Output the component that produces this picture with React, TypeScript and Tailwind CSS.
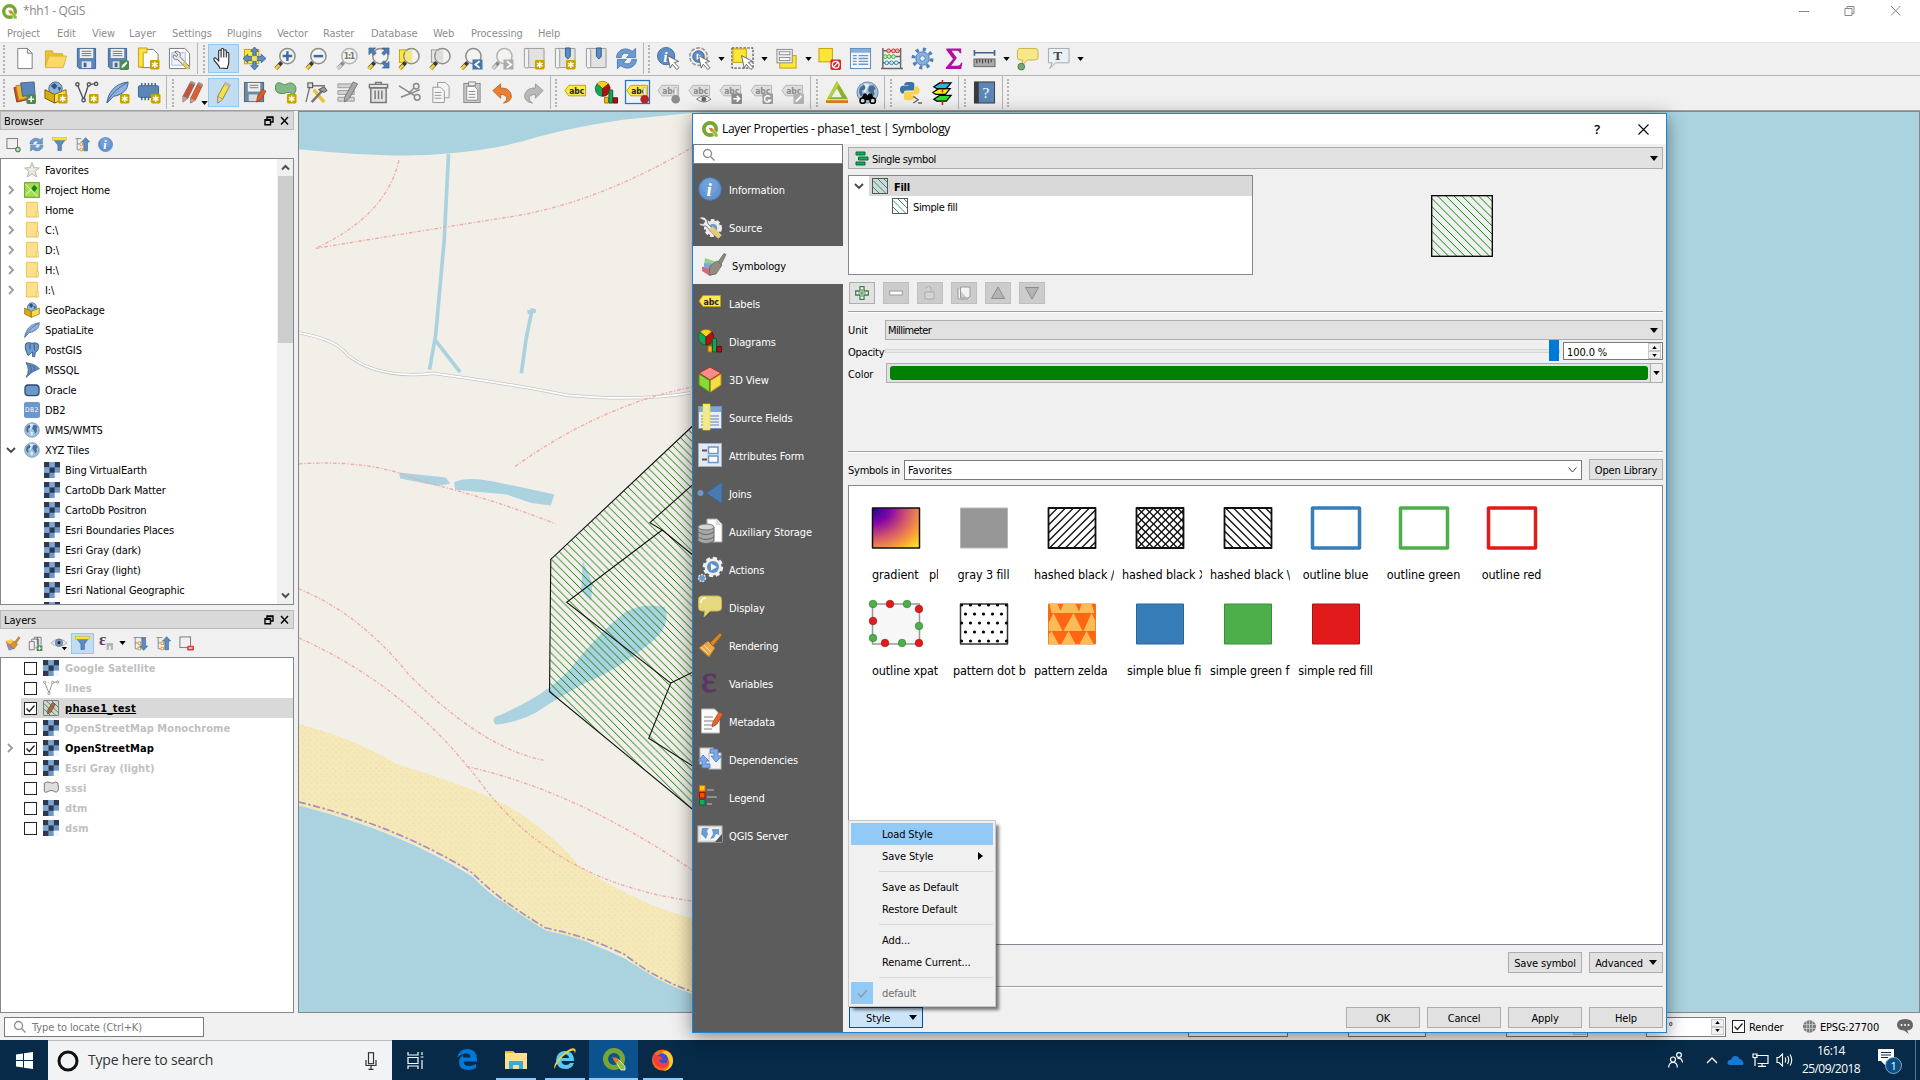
import React from "react";

type Kids = { children?: React.ReactNode };

const Svg = ({ s = 24, children }: { s?: number } & Kids) => (
  <svg width={s} height={s} viewBox="0 0 24 24" className="block shrink-0 overflow-visible">
    {children}
  </svg>
);

/* ---------- shared icon parts ---------- */
const StarBadge = () => (
  <g>
    <rect x="13.5" y="13.5" width="10" height="10" rx="1.5" fill="#c8a000" />
    <path d="M18.5 15v7M15.5 16.8l6 3.4M21.5 16.8l-6 3.4" stroke="#fff" strokeWidth="1.5" />
  </g>
);
const Lens = ({ gray = false, children }: { gray?: boolean } & Kids) => (
  <g>
    <path d="M2 22.500l6-6.500" stroke={gray ? "#8c8c8c" : "#3a3a3a"} strokeWidth="4" />
    <path d="M1.500 23l4-4.300" stroke={gray ? "#d0d0d0" : "#f5cf2e"} strokeWidth="3" />
    <circle cx="14" cy="9.500" r="8" fill="#f3f3f1" fillOpacity=".85" stroke={gray ? "#b4b4b4" : "#8f8f8b"} strokeWidth="1.600" />
    {children}
  </g>
);
const Tag = ({ gray = false, children }: { gray?: boolean } & Kids) => (
  <g>
    <path d="M1 10l4-5.500h17.500v11H5z" fill={gray ? "#dedede" : "#fce94f"} stroke={gray ? "#b5b5b5" : "#c4a000"} />
    <text x="5.500" y="13.500" fontSize="9.500" fontWeight="700" fill={gray ? "#8a8a8a" : "#222"} textLength="15.500" lengthAdjust="spacingAndGlyphs">
      abc
    </text>
    {children}
  </g>
);
const Cursor = () => <path d="M11 9l11.500 6-4.500 1.200 5 5.300-2.300 2-4.700-5.500-2.200 4z" fill="#fff" stroke="#555" strokeWidth=".9" />;
const Book = () => (
  <g>
    <path d="M5 1.500h18v20H5z" fill="#e2e2e2" stroke="#9a9a9a" />
    <path d="M5 1.500H2.500v19c0 2 4.500 2 4.500 0v-17c0-1-2-2-2-2z" fill="#f2f2f2" stroke="#9a9a9a" />
  </g>
);
const Floppy = () => (
  <g>
    <path d="M2.500 1.500h19v21h-17l-2-2z" fill="#5b86b8" stroke="#3f6391" />
    <rect x="5" y="2" width="14" height="9.500" fill="#efefef" />
    <path d="M7 4.500h10M7 6.800h10M7 9h10" stroke="#777" />
    <rect x="7" y="15" width="10" height="7" fill="#e5e5e5" />
    <rect x="9" y="16.500" width="3" height="4.500" fill="#3f6391" />
  </g>
);
const Globe = ({ c = "#9cc0e2" }: { c?: string }) => (
  <g>
    <circle cx="12" cy="12" r="11" fill={c} stroke="#6a87a6" />
    <path d="M4 7l4-3 3 1-2 4-3 1 1 4-2 2c-2-3-2-6-1-9zM14 5l4-.5 2.500 3-2 3 1 3-3 4-1.500-5-2.500-2 .5-3z" fill="#4a6d93" />
    <path d="M8 2.500l6 .5-2 4-2 5-2-1 2-4zM10 14l4 2-2 5-2-2z" fill="#e3eef8" />
  </g>
);

const I: Record<string, React.ReactNode> = {
  page: <path d="M5 1.500h10l5 5v16H5z M15 1.500v5h5" fill="#fff" stroke="#7d7d7d" />,
  folder: (
    <g>
      <path d="M1.500 21V4h7l2 3h9v3" fill="#e9c23c" stroke="#d3ab2a" />
      <path d="M1.500 21.500L5 9.500h18.500L20 21.500z" fill="#fcd965" stroke="#dcb338" />
    </g>
  ),
  save: <Floppy />,
  saveAs: (
    <g>
      <Floppy />
      <rect x="14" y="14" width="10" height="10" rx="1.500" fill="#4c8a53" />
      <path d="M16 22l1-3 4-3.500 1.300 1.300-3.500 4z" fill="#fff" />
    </g>
  ),
  newLayout: (
    <g>
      <path d="M4 2.500h13l5 5v14H4z" fill="#fff" stroke="#777" />
      <path d="M1.500 1h9v5h-4v15h-5z" fill="#fbe14c" stroke="#c8a000" />
      <StarBadge />
    </g>
  ),
  layouts: (
    <g>
      <path d="M1.500 1.500h16l5 5v16h-21z" fill="#fff" stroke="#777" />
      <rect x="4" y="6" width="14" height="13" fill="#eef2fb" stroke="#a9b8e0" />
      <path d="M7 5c4-2 7 2 5.500 5l9.500 10-2.500 2.500L10 13C7 14 4 11 6 8l3 2 1-2z" fill="#e7e7e7" stroke="#6b6b6b" />
      <path d="M16 16l5.500 6.500" stroke="#e8cd5c" strokeWidth="3.500" />
    </g>
  ),
  hand: (
    <path
      d="M8 22c0-3-5-6-6-9-.5-2 1.500-2 2.500-1L7 14.500V4.500c0-1.800 2.500-1.800 2.500 0V3c0-2 2.800-2 2.800 0v1.200c0-1.700 2.600-1.700 2.600.3v2c0-1.500 2.500-1.500 2.600.3V16c0 3-1.500 4-1.500 6.500zM9.500 4.500v6.500M12.300 4v7M14.900 6v5"
      fill="#fff"
      stroke="#222"
      strokeWidth="1.100"
    />
  ),
  pan: (
    <g>
      <rect x="1.500" y="2.500" width="15" height="15" fill="#fde638" stroke="#c4a000" />
      <path d="M12 0l4 4.500h-2.300v5.300h5.300V7.500L24 12l-5 4.500v-2.300h-5.300v5.300H16L12 24l-4-4.500h2.300v-5.300H5v2.300L0 12l5-4.500v2.300h5.300V4.500H8z" fill="#5b8cc4" stroke="#32598a" strokeWidth=".8" />
      <rect x="9.500" y="9.500" width="5" height="5" fill="#fde638" />
    </g>
  ),
  zoomIn: <Lens><path d="M14 4.500v10M9 9.500h10" stroke="#3d6ca5" strokeWidth="2.600" /></Lens>,
  zoomOut: <Lens><path d="M9 9.500h10" stroke="#3d6ca5" strokeWidth="2.600" /></Lens>,
  zoomOne: <Lens gray><text x="8" y="13" fontSize="9" fontWeight="700" fill="#777" textLength="12">1:1</text></Lens>,
  zoomFull: (
    <g>
      <Lens />
      <path d="M2 1h7L6.700 3.300l3 3L7.300 8.700l-3-3L2 8zM23 1v7l-2.300-2.300-3 3-2.400-2.400 3-3L16 1zM23 22h-7l2.300-2.300-3-3 2.400-2.400 3 3L23 15z" fill="#4b7cb3" stroke="#2f5681" strokeWidth=".6" />
    </g>
  ),
  zoomSel: (
    <g>
      <rect x="1.500" y="3" width="13" height="13" fill="#fde638" stroke="#c4a000" />
      <Lens><path d="M8 4h6.500v11c-4 1-7-2-7.500-5z" fill="#f3e67c" /></Lens>
    </g>
  ),
  zoomLayer: (
    <g>
      <rect x="2.500" y="3" width="12" height="13" fill="#e3e3e3" stroke="#999" />
      <Lens><path d="M8 4h6.500v11c-4 1-7-2-7.500-5z" fill="#dcdcdc" /></Lens>
    </g>
  ),
  zoomLast: (
    <Lens>
      <rect x="13" y="13" width="10.500" height="10.500" fill="#4677ac" />
      <path d="M20.500 14.800l-4.500 3.500 4.500 3.500" stroke="#fff" strokeWidth="1.800" fill="none" />
    </Lens>
  ),
  zoomNext: (
    <Lens gray>
      <rect x="13" y="13" width="10.500" height="10.500" fill="#adadad" />
      <path d="M16.500 14.800l4.500 3.500-4.500 3.500" stroke="#fff" strokeWidth="1.800" fill="none" />
    </Lens>
  ),
  newView: <g><Book /><StarBadge /></g>,
  newMark: <g><Book /><path d="M13 1h5v9l-2.500 2.500L13 10z" fill="#5b8cc4" stroke="#32598a" /><StarBadge /></g>,
  marks: <g><Book /><path d="M13 1h5v9l-2.500 2.500L13 10z" fill="#5b8cc4" stroke="#32598a" /></g>,
  refresh: (
    <g fill="#6c9bd0" stroke="#3f6fa6" strokeWidth=".8">
      <path d="M1.500 11C2 3 11-1 18 4.500L21.500 1.500v9.500h-9.500l3.200-3.200C10 5 7 7 6.500 11z" />
      <path d="M22.500 13c-.5 8-9.500 12-16.500 6.500L2.500 22.500V13H12l-3.200 3.200C14 19 17 17 17.500 13z" />
    </g>
  ),
  identify: (
    <g>
      <circle cx="9.500" cy="9.500" r="9" fill="#5f8fc6" stroke="#3f6fa6" />
      <text x="6.500" y="15.500" fontSize="16" fontStyle="italic" fontWeight="700" fontFamily="Liberation Serif" fill="#fff">i</text>
      <Cursor />
    </g>
  ),
  action: (
    <g>
      <circle cx="11" cy="10" r="9" fill="#eee" stroke="#999" strokeDasharray="4 1.650" strokeWidth="2" />
      <circle cx="11" cy="10" r="8.200" fill="#eee" />
      <circle cx="11" cy="10" r="6" fill="#5b8cc4" stroke="#3f6391" />
      <path d="M9 6.500v7l5.500-3.500z" fill="#fff" />
      <Cursor />
    </g>
  ),
  select: (
    <g>
      <rect x="1" y="1" width="22" height="21" fill="none" stroke="#222" strokeDasharray="2.500 1.500" />
      <rect x="2" y="2" width="14" height="14" fill="#fde638" stroke="#c4a000" />
      <Cursor />
    </g>
  ),
  form: (
    <g>
      <rect x="5" y="9" width="17" height="13" fill="#fde638" stroke="#c4a000" />
      <rect x="2" y="2.500" width="16" height="14" fill="#ececec" stroke="#8b8b8b" />
      <rect x="4.500" y="5" width="11" height="3" fill="#fff" stroke="#8b8b8b" />
      <rect x="4.500" y="11" width="11" height="3" fill="#fff" stroke="#8b8b8b" />
    </g>
  ),
  deselect: (
    <g>
      <rect x="1" y="1.500" width="14" height="14" fill="#fde638" stroke="#c4a000" />
      <rect x="13" y="13" width="11" height="11" rx="1.500" fill="#d9222a" />
      <circle cx="18.500" cy="18.500" r="3.500" fill="none" stroke="#fff" strokeWidth="1.400" />
      <path d="M16 21l5-5" stroke="#fff" strokeWidth="1.400" />
    </g>
  ),
  table: (
    <g>
      <rect x="1.500" y="1.500" width="21" height="21" fill="#f3f7fb" stroke="#5b86b8" />
      <rect x="2" y="2" width="20" height="4" fill="#86aedb" />
      <path d="M4 9h4M4 12h4M4 15h4M4 18h4M10 9h10M10 12h10M10 15h10M10 18h10" stroke="#6c97c7" strokeWidth="1.500" />
    </g>
  ),
  abacus: (
    <g>
      <path d="M3 1v21M21.500 1v21M1 22.500h23M3 4h18M3 10h18M3 16.500h18" stroke="#666" strokeWidth="1.500" />
      {[9, 14, 18].map((x) => <circle key={x} cx={x} cy="4" r="2" fill="#f7b0b0" stroke="#c33" />)}
      {[5.500, 9.500, 14].map((x) => <circle key={x} cx={x} cy="10" r="2" fill="#c4ecc4" stroke="#4a4" />)}
      {[7, 12, 17].map((x) => <circle key={x} cx={x} cy="16.500" r="2" fill="#cfe4f5" stroke="#38a" />)}
    </g>
  ),
  gear: (
    <g>
      <circle cx="12" cy="12" r="9.500" fill="none" stroke="#4f80b8" strokeWidth="4" strokeDasharray="3.200 4.260" />
      <circle cx="12" cy="12" r="7" fill="#86b0e0" stroke="#4f80b8" />
      <circle cx="12" cy="12" r="2.800" fill="#f0f0f0" stroke="#4f80b8" />
    </g>
  ),
  sigma: <path d="M4.500 1.500h15.500v5h-1.500c-.5-2-1.500-2.500-4-2.500H10l5.500 7.500L9.500 19.500h6c3 0 3.800-1 4.300-3h1.500L20 23H4v-1.500l7.500-9L4.500 3z" fill="#b0129f" />,
  ruler: (
    <g>
      <path d="M1.500 6h21M1.500 3v6M22.500 3v6" stroke="#3f6391" strokeWidth="1.700" />
      <rect x="1" y="12.500" width="22" height="8" fill="#a9a9a9" stroke="#666" />
      <path d="M4 13v4M7 13v3M10 13v4M13 13v3M16 13v4M19 13v3" stroke="#333" />
    </g>
  ),
  bubble: (
    <g>
      <path d="M4 1.500h16q3 0 3 3v6q0 3-3 3h-8l-6 6 1-6H4q-2.500 0-2.500-3v-6q0-3 2.500-3z" fill="#f8e88b" stroke="#cdaf3c" />
      <circle cx="5.500" cy="20.500" r="3.500" fill="#79a878" stroke="#4f7d4e" />
    </g>
  ),
  annot: (
    <g>
      <path d="M1.500 1.500h21.500v15H9l-6 6 2.500-6h-4z" fill="#e9f0f6" stroke="#a0a8b0" />
      <text x="6.500" y="13.500" fontSize="14" fontFamily="Liberation Serif" fontWeight="700" fill="#444">T</text>
    </g>
  ),
  dataSource: (
    <g>
      <path d="M1 7l13-3 3 15-13 3z" fill="#c5552c" stroke="#8f3b1c" />
      <path d="M3 5l14-2 2 14-13 3z" fill="#f1b52d" stroke="#b98516" />
      <path d="M8 2l14-1 1 13-13 2z" fill="#5b86b8" stroke="#3f6391" />
      <rect x="14" y="14" width="10" height="10" rx="1.500" fill="#4c8a53" />
      <path d="M19 16v6M16 19h6" stroke="#fff" strokeWidth="1.600" />
    </g>
  ),
  geopkg: (
    <g>
      <circle cx="12" cy="8" r="7" fill="#8fb4db" stroke="#486d96" />
      <path d="M7 5l4-3 3 3-3 4zM14 6l4 1-2 4z" fill="#33557d" />
      <path d="M1 9l10 5v9L1 18z" fill="#d8ac10" stroke="#7a6200" />
      <path d="M23 9l-12 5v9l12-5z" fill="#f7e04c" stroke="#7a6200" />
    </g>
  ),
  vee: (
    <g fill="none" stroke="#555" strokeWidth="1.500">
      <path d="M2.500 4l6.500 15.500L14 4l8-1.500" />
      <circle cx="2.500" cy="3.500" r="1.700" fill="#fff" /><circle cx="9" cy="20" r="1.700" fill="#fff" />
      <circle cx="14.500" cy="3.500" r="1.700" fill="#fff" /><circle cx="22" cy="3" r="1.700" fill="#fff" />
    </g>
  ),
  veeGray: (
    <g fill="none" stroke="#9a9a9a" strokeWidth="1.500">
      <path d="M2.500 4l6.500 15.500L14 4l8-1.500" />
      <circle cx="2.500" cy="3.500" r="1.700" fill="#fff" /><circle cx="9" cy="20" r="1.700" fill="#fff" />
      <circle cx="14.500" cy="3.500" r="1.700" fill="#fff" /><circle cx="22" cy="3" r="1.700" fill="#fff" />
    </g>
  ),
  feather: (
    <g>
      <path d="M1 23C2 13 8 3 23 1c0 8-5 13-15 15z" fill="#8db2dd" stroke="#3f6391" />
      <path d="M1 23C4 15 12 7 22 2" stroke="#3f6391" fill="none" />
    </g>
  ),
  chip: (
    <g>
      <path d="M5 2v18M8.500 2v18M12 2v18M15.500 2v18M19 2v18" stroke="#3f6391" strokeWidth="1.500" />
      <rect x="1.500" y="5" width="21" height="12" rx="1" fill="#5b86b8" stroke="#3f6391" />
    </g>
  ),
  pencils: (
    <g>
      <path d="M2 16L10 1l4.500 2L7 18l-5 4z" fill="#c4573a" stroke="#8a5a4a" strokeWidth=".8" />
      <path d="M10 18L18 2l4.500 2.500L15 20l-5 3z" fill="#dd5f30" stroke="#8a5a4a" strokeWidth=".8" />
      <path d="M2 16v6l5-4zM10 18v5l5-3z" fill="#a9a9a9" /><path d="M10 1l4.500 2M18 2l4.500 2.500" stroke="#999" strokeWidth="2.500" />
    </g>
  ),
  pencil: (
    <g>
      <path d="M6 16L14 1.500l5 2.500-8 15-5 4z" fill="#f4e04b" stroke="#96862a" />
      <path d="M13.500 2.500l5 2.500" stroke="#bbb" strokeWidth="3.500" />
      <path d="M6 16v7l5-4z" fill="#e8d8b0" stroke="#777" strokeWidth=".6" />
    </g>
  ),
  saveEdits: (
    <g>
      <rect x="1.500" y="1.500" width="20" height="20" fill="#6e8aa3" stroke="#4c657d" />
      <rect x="5" y="2" width="13" height="9" fill="#eee" /><path d="M7 4.500h9M7 7h9" stroke="#777" />
      <rect x="6" y="14" width="9" height="7" fill="#ddd" />
      <path d="M14 22l1-5 5-8.500 4 2-5 9z" fill="#dd5b2a" stroke="#9a3c18" strokeWidth=".7" />
    </g>
  ),
  polygon: (
    <g>
      <path d="M1.500 7c0-6 4-6 7-4 4 2 5-1 9-1 6 1 7 8 3 12-3 1-3-3-7-2-5 2-12 2-12-5z" fill="#84b987" stroke="#4c8a53" />
      <StarBadge />
    </g>
  ),
  vertex: (
    <g>
      <path d="M6 5h15M5 6L1 22" stroke="#777" strokeWidth="1.400" /><rect x="3" y="2" width="5" height="5" fill="#ddd" stroke="#444" />
      <path d="M9 9l11 13" stroke="#eac33a" strokeWidth="3.500" /><path d="M7 22L19 9" stroke="#777" strokeWidth="2.500" /><path d="M14 9l6-3 3 4-3 2z" fill="#999" stroke="#555" />
    </g>
  ),
  modify: (
    <g>
      <path d="M2 3h17v4H2zM2 10h17v4H2zM2 17h17v4H2z" fill="#d4d4d4" stroke="#999" />
      <path d="M9 17L18 1l4.500 2L14 18l-5 4z" fill="#a8a8a8" stroke="#777" />
    </g>
  ),
  trash: (
    <g fill="#e4e4e4" stroke="#777" strokeWidth="1.500">
      <path d="M4 7h16v15.500H4z" /><path d="M2.500 3.500h19V7h-19z" /><path d="M9 3.500V1.500h6v2M8.500 10v9M12 10v9M15.500 10v9" fill="none" />
    </g>
  ),
  cut: (
    <g fill="none" stroke="#8a8a8a" strokeWidth="1.600">
      <path d="M1 5l16 10M3 17L23 9" /><circle cx="20" cy="17" r="3" /><circle cx="19" cy="5.500" r="2.800" /><path d="M17 7l-6 6" />
    </g>
  ),
  copy: (
    <g fill="#f4f4f4" stroke="#999">
      <path d="M9 1.500h8l4 4v12H9z" /><path d="M4 6.500h8l4 4v12H4z" /><path d="M6 12h7M6 15h7M6 18h7" />
    </g>
  ),
  paste: (
    <g stroke="#888">
      <rect x="4" y="2.500" width="17" height="20" fill="#c9c9c9" /><path d="M7 5.500h8l3.500 3.500v11H7z" fill="#fafafa" /><rect x="9" y="1" width="7" height="4" fill="#eee" /><path d="M9 11h7M9 14h7M9 17h7" />
    </g>
  ),
  undo: <path d="M2 10l8-7v4.500c8-1 12 5 11 10-1 3-4 5-8 5.500 5-3 5-9-3-9V18z" fill="#e9803a" stroke="#c9641f" />,
  redo: <path d="M22 10l-8-7v4.500c-8-1-12 5-11 10 1 3 4 5 8 5.500-5-3-5-9 3-9V18z" fill="#b9b9b9" stroke="#989898" />,
  tag: <Tag />,
  diagram: (
    <g>
      <path d="M8 8L2 3a8 8 0 0 1 12 0z" fill="#fcd116" stroke="#8a6d00" strokeWidth=".7" />
      <path d="M8 8v8A8 8 0 0 1 2 3z" fill="#15a356" stroke="#0b5c30" strokeWidth=".7" />
      <path d="M8 8v8a8 8 0 0 0 6-13z" fill="#b01212" stroke="#5c0909" strokeWidth=".7" />
      <path d="M10 17h4v6h-4z" fill="#fcb814" stroke="#a86f00" /><path d="M14.500 9.500h4V23h-4z" fill="#15a356" stroke="#0b5c30" /><path d="M19 17.500h4.500V23H19z" fill="#b01212" stroke="#5c0909" />
    </g>
  ),
  tagPinRed: (
    <g>
      <rect x="-.5" y="-.5" width="25" height="24" fill="#eaf3fb" stroke="#2a6fc0" strokeWidth="1.300" />
      <Tag><path d="M18 7h3v9h-3z" fill="#f2f2f2" stroke="#888" strokeWidth=".5" /><circle cx="19.500" cy="19" r="4.500" fill="#b52525" /></Tag>
    </g>
  ),
  tagPin: <Tag gray><path d="M18 7h3v9h-3z" fill="#f2f2f2" stroke="#888" strokeWidth=".5" /><circle cx="19.500" cy="19" r="4.500" fill="#8c8c8c" /></Tag>,
  tagEye: <Tag gray><path d="M9 19q8-7 15 0-7 6-15 0z" fill="#eee" stroke="#777" /><circle cx="16.500" cy="19" r="2.500" fill="#666" /></Tag>,
  tagMove: <Tag gray><rect x="13" y="13" width="11" height="11" rx="1" fill="#8c8c8c" /><path d="M15 18.500h6M18.500 15.500l3 3-3 3" stroke="#fff" strokeWidth="1.700" fill="none" /></Tag>,
  tagRotate: <Tag gray><rect x="13" y="13" width="11" height="11" rx="1" fill="#9c9c9c" /><path d="M21 16.500a3.300 3.300 0 1 0 .5 3.500h-3" stroke="#fff" strokeWidth="1.500" fill="none" /></Tag>,
  tagEdit: <Tag gray><rect x="13" y="13" width="11" height="11" rx="1" fill="#b4b4b4" /><path d="M15.500 21.500l6-6" stroke="#fff" strokeWidth="2" /></Tag>,
  triangle: (
    <g>
      <path d="M12.500 0L24 19H2z" fill="#8cb02c" /><path d="M12.500 7.500l5 9.500H6.500z" fill="#f0f0f0" /><path d="M12.500 0l2 4L6.500 17 2 19z" fill="#b5d13f" />
      <path d="M1 21.500h23" stroke="#e07b1d" strokeWidth="3" />
    </g>
  ),
  binocular: (
    <g>
      <Globe c="#a9c3dc" />
      <path d="M4.500 20l3.500-7h2.500l1.500 2 1.500-2H16l4 7z" fill="#0a0a0a" /><circle cx="7" cy="20.500" r="2.800" fill="#dcdcdc" stroke="#000" strokeWidth="1.600" /><circle cx="17.500" cy="20.500" r="2.800" fill="#dcdcdc" stroke="#000" strokeWidth="1.600" />
    </g>
  ),
  python: (
    <g>
      <path d="M9 1h4q3 0 3 3v4q0 2-3 2H8q-3 0-3 3H3q-2-1-2-4 0-4 3-4h6V4.500H5.500V3Q6 1 9 1z" fill="#3b73a6" />
      <path d="M11 20h-3q-3 0-3-3v-3q0-3 3-3h5q3 0 3-3V5.500h2.500q3 1 3 4.500 0 4-3 4h-6v1H16v2q0 3-5 3z" fill="#fcd24a" />
      <path d="M15 16l5 3.500-5 3.500M20 23h4" stroke="#666" strokeWidth="1.400" fill="none" />
    </g>
  ),
  layers3: (
    <g stroke="#000" strokeWidth="1.300">
      <path d="M4 19l6-4h12l-5 6H7z" fill="#2ee02e" /><path d="M3 12l6-4h12l-5 6H6z" fill="#f5f11a" /><path d="M4 6l6-4h12l-5 6H7z" fill="#2bb5d8" />
      <path d="M13-1v4M13 8v4M13 21v4" stroke="#e01010" strokeWidth="1.600" />
    </g>
  ),
  help: (
    <g>
      <rect x="1.500" y="1" width="21" height="22" fill="#5b86b8" stroke="#3a3a3a" /><rect x="1.500" y="1" width="4.500" height="22" fill="#3a3a3a" />
      <text x="10" y="17.500" fontSize="16" fontFamily="Liberation Serif" fill="#fff">?</text>
    </g>
  ),
  /* browser / layer tree */
  addLayer: <g><rect x="1.500" y="2.500" width="17" height="16" fill="none" stroke="#777" strokeWidth="1.500" /><circle cx="19" cy="20" r="3.500" fill="#cfe6cf" stroke="#4c8a53" strokeWidth="2" /></g>,
  filter: <g><path d="M1.500 2.500h21L15 13v8.500h-5.500V13z" fill="#5b8cc4" stroke="#3f6391" /><rect x="1" y="1" width="22" height="4" fill="#fde638" stroke="#c4a000" strokeWidth=".7" /></g>,
  collapse: (
    <g>
      <path d="M1 2.500h9M3.500 2v18.500h4M3.500 11h4" stroke="#888" strokeWidth="1.500" fill="none" /><path d="M8 9.500h4v4H8zM8 18h4v4H8z" fill="#fff" stroke="#e7942a" strokeWidth="1.500" />
      <path d="M17 1l6.500 7H20v14h-6V8h-3.500z" fill="#5b8cc4" stroke="#3f6391" />
    </g>
  ),
  expand: (
    <g>
      <path d="M1 2.500h20M3.500 2v18.500h4M3.500 11h4" stroke="#888" strokeWidth="1.500" fill="none" /><path d="M8 9.500h4v4H8zM8 18h4v4H8z" fill="#fff" stroke="#e7942a" strokeWidth="1.500" />
      <path d="M17 23l6.500-7H20V3h-6v13h-3.500z" fill="#5b8cc4" stroke="#3f6391" />
    </g>
  ),
  info: <g><circle cx="12" cy="12" r="11.300" fill="#6395d2" stroke="#4a7ab5" /><circle cx="12" cy="9" r="8" fill="#86aee0" opacity=".4" /><text x="8.500" y="18.500" fontSize="19" fontStyle="italic" fontWeight="700" fontFamily="Liberation Serif" fill="#fff">i</text></g>,
  star: <path d="M12 1l3 7.500 8 .5-6.200 5 2.200 8.500-7-4.700-7 4.700L7.200 14 1 9l8-.5z" fill="#e9e9e1" stroke="#b5b5aa" strokeWidth="1.500" />,
  projHome: <g><rect x="1" y="1" width="22" height="22" fill="#a6dc4e" stroke="#5aa02c" strokeWidth="1.500" /><path d="M2 3l18 19M2 19L14 9" stroke="#e6f7c0" strokeWidth="1.500" /><path d="M15 4l5 5-4 6-5-5z" fill="#128a12" /></g>,
  dir: <g><path d="M3.500 .5h17v22h-17z" fill="#fce08b" stroke="#e5bd45" strokeWidth="1.300" /><path d="M18.500 14h3v8.500h-3z" fill="#fce9ae" stroke="#e5bd45" /></g>,
  elephant: <path d="M3 2q5-2 9 0 5-2 9 1 2 3 0 8-1 3-4 4l-1 7h-3v-7l-2 1q-3 4-5 4l-2-4Q0 8 3 2zM9 3v8M15 3l1 10" fill="#6e9bcf" stroke="#395c86" strokeWidth="1.500" />,
  mssql: <path d="M3 1q14 2 20 9-10 3-20 13Q10 12 3 1zM9 4q4 7 1 12M14 5q3 5 1 8" fill="#5f8cbf" stroke="#3d5f8c" strokeWidth="1.300" />,
  oracle: <rect x="1.500" y="4.500" width="21" height="16" rx="5" fill="#6b97ca" stroke="#2f4b70" strokeWidth="2" />,
  db2: <g><rect width="24" height="24" rx="3" fill="#6b97ca" /><text x="1.500" y="15" fontSize="10" fill="#fff" textLength="20">DB2</text></g>,
  globe: <Globe />,
  tiles: (
    <g>
      <rect width="24" height="24" fill="#6e97c7" />
      <path d="M0 0h8v8H0zM16 0h8v8h-8zM8 8h8v8H8zM0 16h8v8H0z" fill="#2d3a4e" />
      <path d="M8 0h8v8H8zM0 8h8v8H0z" fill="#7ea5d4" /><path d="M16 16h8v8h-8z" fill="#f4f7fb" />
    </g>
  ),
  brush: (
    <g>
      <path d="M1 8l12 1 2 11-9 3z" fill="#e36a6a" /><path d="M1 8l9-3 6 4-6 6z" fill="#f4cf45" /><path d="M3 16l8-3 3 7-6 3z" fill="#6c9bd6" />
      <path d="M8 15l7-7 5 5-6 8z" fill="#d8943b" stroke="#9c6420" /><path d="M16 9l6-8 2 2-6 8z" fill="#d8943b" stroke="#9c6420" />
    </g>
  ),
  group: <g fill="none" stroke="#777" strokeWidth="1.500"><path d="M2 9h8v13H2zM6 9V5h11v14h-5M10 5V2h11v12" /><path d="M15 2v12" stroke="#3f6391" /><rect x="14" y="15" width="9" height="9" fill="#4c8a53" stroke="none" /><path d="M18.500 16.500v6M15.500 19.500h6" stroke="#fff" /></g>,
  eye: <g><path d="M0 12q12-12 24 0-12 10-24 0z" fill="#e9e9e9" stroke="#999" /><circle cx="12" cy="11.500" r="5.500" fill="#7c9cbd" stroke="#4e6d8e" /><circle cx="12" cy="11.500" r="2.200" fill="#123" /><path d="M16 18h8l-4 5z" fill="#000" /></g>,
  epsilon: <g><text x="0" y="16" fontSize="29" fontFamily="Liberation Serif" fontWeight="700" fill="#683b6e">ε</text><path d="M13 12h11v12h-4v-7h-3v7h-4z" fill="#b5b5b5" /></g>,
  removeLayer: <g><rect x="1.500" y="1.500" width="17" height="17" fill="none" stroke="#777" strokeWidth="1.500" /><rect x="13" y="15.500" width="11" height="7.500" rx="2" fill="#e0393e" /><path d="M15.500 19.200h6" stroke="#fff" strokeWidth="2" /></g>,
  sssi: <path d="M2 5q4-4 9-1 4 2 8-1 4 0 4 6 1 8-3 9-3 0-5-2-5-1-9 2-5 2-4-5z" fill="#dedede" stroke="#777" strokeWidth="1.500" />,
  phase: (
    <g>
      <rect x="1" y="1" width="22" height="22" fill="#cfd6cf" stroke="#555" /><path d="M1 5l18 18M5 1l18 18M13 1l10 10M1 13l10 10" stroke="#2f7a46" strokeWidth="1.200" />
      <path d="M7 15L14 4l4.500 2.500L12 18l-5 3z" fill="#9d6a46" stroke="#6b4429" />
    </g>
  ),
  /* dialog pages */
  source: (
    <g>
      <circle cx="15" cy="13" r="7.500" fill="#e6e6e6" stroke="#efefef" strokeWidth="3" strokeDasharray="3.500 2" /><circle cx="15" cy="13" r="4" fill="#6d9ac9" />
      <path d="M1 3q5-3 8 2l1 4 12 11-3 3L8 11Q2 12 1 8l4 1 2-3z" fill="#ececec" stroke="#666" strokeWidth=".8" /><path d="M13 13l9 9" stroke="#e6cb78" strokeWidth="5" />
    </g>
  ),
  symb: (
    <g>
      <path d="M1 14l14-2-1 9-5 2-8-5z" fill="#d56a78" /><path d="M4 5l12 4-3 6-10-3z" fill="#93d08a" /><path d="M3 10l10 1 2 5-12-1z" fill="#7ba7de" />
      <path d="M9 13l7-5 5 4-6 9-7 1z" fill="#938d80" stroke="#666" strokeWidth=".8" /><path d="M17 9l6-8.500 2 1-5 10z" fill="#8f8a80" stroke="#666" strokeWidth=".8" />
    </g>
  ),
  cube: <g strokeWidth="1"><path d="M12 0l11 6-11 7L1 6z" fill="#f58c8c" stroke="#b92626" /><path d="M1 7l10.500 6.500V25L1 18z" fill="#8ad839" stroke="#4e9412" /><path d="M23 7l-10.500 6.500V25L23 18z" fill="#f7dc4a" stroke="#b99708" /></g>,
  fields: (
    <g>
      <rect x=".5" y="1.500" width="23" height="22" fill="#e9eef4" stroke="#7394b8" /><rect x="1" y="2" width="22" height="5" fill="#7ea7d6" /><path d="M3 11h18M3 14h18M3 17h18M3 20h18" stroke="#8ba6c4" strokeWidth="1.500" />
      <rect x="5.500" y="-.5" width="6" height="25" fill="#f0e8a0" stroke="#f7ee3c" strokeWidth="1.500" />
    </g>
  ),
  attr: <g><rect x=".5" y=".5" width="23" height="23" fill="#e4e9ee" stroke="#9db2c8" /><path d="M4 7.500h5M4 16.500h5" stroke="#556" strokeWidth="2" /><path d="M10.500 4h9.500v6.500h-9.500zM10.500 13h9.500v6.500h-9.500z" fill="#fff" stroke="#6a97cc" strokeWidth="1.500" /></g>,
  joins: <g><circle cx="2.500" cy="12" r="3" fill="#6a97cc" /><path d="M24 1v22L8 12z" fill="#4b7ab0" stroke="#3a6292" /></g>,
  aux: (
    <g>
      <path d="M9 0h10l5 5v18H9z" fill="#fff" stroke="#aaa" /><path d="M18 0v6h6" fill="#ddd" />
      <path d="M0 8v14q8 5 16 0V8z" fill="#a8a8a8" stroke="#666" /><path d="M0 13q8 5 16 0M0 18q8 5 16 0" stroke="#666" fill="none" /><ellipse cx="8" cy="8" rx="8" ry="3" fill="#d5d5d5" stroke="#777" />
    </g>
  ),
  actions: (
    <g>
      <circle cx="15" cy="10" r="8.500" fill="#eee" stroke="#eee" strokeWidth="3.500" strokeDasharray="4 2.600" /><circle cx="15" cy="10" r="8" fill="#eee" /><circle cx="15" cy="10" r="6" fill="#5f91c8" />
      <path d="M13 6.500v7l6-3.500z" fill="#fff" /><circle cx="4" cy="21" r="3.500" fill="#6d9ac9" stroke="#ddd" strokeWidth="1.500" strokeDasharray="2 1" />
    </g>
  ),
  display: <g><path d="M4 1h16q3.500 0 3.500 3.500v8q0 3.500-3.500 3.500h-8l-6 6 1-6H4Q.5 16 .5 12.500v-8Q.5 1 4 1z" fill="#e6d97d" stroke="#c9b94d" /><path d="M3 8q0-5 5-5" stroke="#fff" strokeWidth="1.500" fill="none" /></g>,
  render: <g><path d="M1 15l9-7 7 7-6 9z" fill="#e9a94e" stroke="#b77624" /><path d="M12 10L22 0l2 2-9 11z" fill="#d28a2e" stroke="#9e6213" /><path d="M3 14l7 7M6 12l7 7" stroke="#fce0ae" /></g>,
  vars: <text x="3" y="21" fontSize="38" fontFamily="Liberation Serif" fill="#5c3566" stroke="#5c3566" strokeWidth=".8">ε</text>,
  meta: <g><path d="M3.500 0h13l5 5v19h-18z" fill="#fafafa" stroke="#bbb" /><path d="M6 8h9M6 12h12M6 16h12M6 20h8" stroke="#aaa" strokeWidth="1.300" /><path d="M14 18l1-5 6-10 4 2-6 10z" fill="#e2662e" stroke="#a23f14" strokeWidth=".7" /></g>,
  deps: (
    <g>
      <rect x="2" y="1" width="13" height="16" fill="#f2f2f2" stroke="#bbb" /><rect x="11" y="6" width="12" height="16" fill="#f2f2f2" stroke="#bbb" />
      <path d="M12 2h8v7h4l-6 6-5-6h3V6h-4zM12 21H4v-7H0l5-6 6 6H8v3h4z" fill="#7fa9ea" stroke="#4676c0" strokeWidth=".8" />
    </g>
  ),
  legend: (
    <g>
      <rect x="1.500" y=".5" width="5.500" height="5.500" fill="#fcc40e" stroke="#d96f00" /><rect x="1.500" y="7.500" width="5.500" height="5.500" fill="#f55200" stroke="#b00" /><rect x="1.500" y="14.500" width="5.500" height="5.500" fill="#0fae57" stroke="#064" />
      <path d="M9 5h7M9 12h10M9 19h5" stroke="#8f8f8f" strokeWidth="2" />
    </g>
  ),
  server: <g><rect x="0" y="3" width="24" height="16" fill="#e6e6e6" stroke="#bbb" /><rect x="3" y="5" width="18" height="12" fill="#f4f7fa" /><path d="M4 5h7l-2 3 1 3-2 5-3-3-2-2zM14 6h7v6l-3-1-2 4-4 1 3-5z" fill="#6c9bd0" /><path d="M24 11l-7 8h7z" fill="#555" /></g>,
};

const Icon = ({ n, s = 24 }: { n: string; s?: number }) => <Svg s={s}>{I[n]}</Svg>;

const QLogo = ({ s }: { s: number }) => (
  <Svg s={s}>
    <path fillRule="evenodd" d="M12 0a12 12 0 1 1 0 24A12 12 0 0 1 12 0zm0 5.500a6.500 6.500 0 1 0 0 13a6.500 6.500 0 0 0 0-13z" fill="#76a732" />
    <path d="M13 13l4-.5L24 20v4h-4.500z" fill="#8fbf3f" stroke="#fff" strokeWidth=".8" />
    <path d="M10 10l5 .5 2.500 2.500-3.500 3.500-2-2.500z" fill="#ee7913" />
  </Svg>
);

const Down = ({ big = false }: { big?: boolean }) => (
  <svg width={big ? 8 : 7} height={big ? 5 : 4} viewBox="0 0 8 5" className="block shrink-0">
    <path d="M0 0h8L4 5z" fill="#000" />
  </svg>
);
const Grip = () => <div className="mx-[3px] h-7 w-0 shrink-0 border-l-2 border-dotted border-[#b4b4b4]" />;
const Chev = ({ open = false }: { open?: boolean }) => (
  <svg width="10" height="10" viewBox="0 0 10 10" fill="none" stroke={open ? "#444" : "#9c9c9c"} strokeWidth="1.800">
    <path d={open ? "M1 3l4 4 4-4" : "M3 1l4 4-4 4"} />
  </svg>
);

/* ---------- toolbars ---------- */
const Tool = ({ n, on = false, w, arrow = false, star = false }: { n: string; on?: boolean; w?: string; arrow?: boolean; star?: boolean }) => (
  <div className={`flex h-full shrink-0 items-center ${w ?? "w-[31px]"}`}>
    <div className={`relative flex h-[29px] w-[31px] shrink-0 items-center justify-center ${on ? "border border-[#92c9f3] bg-[#c2dcf2]" : ""}`}>
      <Icon n={n} s={23} />
      {star && <div className="absolute bottom-[3px] right-[3px]"><Svg s={23}><StarBadge /></Svg></div>}
    </div>
    {arrow && <div className="ml-[3px]"><Down /></div>}
  </div>
);

const Toolbars = () => (
  <div className="h-[69px] shrink-0 border-b border-[#a0a0a0] bg-[#f0f0f0]">
    <div className="flex h-[34px] items-center border-b border-t border-b-[#b5b5b5] border-t-[#e5e5e5] pb-[1px]">
      <Grip />
      <div className="ml-[1px] flex h-full w-[189px] shrink-0 border-r border-[#b5b5b5]">
        {["page", "folder", "save", "saveAs", "newLayout", "layouts"].map((n) => <Tool key={n} n={n} />)}
      </div>
      <div className="w-[2px]" />
      <Grip />
      <div className="flex h-full w-[436px] shrink-0 border-r border-[#b5b5b5]">
        <Tool n="hand" on />
        {["pan", "zoomIn", "zoomOut", "zoomOne", "zoomFull", "zoomSel", "zoomLayer", "zoomLast", "zoomNext", "newView", "newMark", "marks", "refresh"].map((n) => <Tool key={n} n={n} />)}
      </div>
      <div className="w-[1px]" />
      <Grip />
      <Tool n="identify" />
      <Tool n="action" arrow w="w-[43px]" />
      <Tool n="select" arrow w="w-[44px]" />
      <Tool n="form" arrow w="w-[43px]" />
      {["deselect", "table", "abacus", "gear", "sigma"].map((n) => <Tool key={n} n={n} />)}
      <Tool n="ruler" arrow w="w-[43px]" />
      <Tool n="bubble" />
      <Tool n="annot" arrow w="w-[43px]" />
    </div>
    <div className="flex h-[34px] items-center pb-[1px]">
      <Grip />
      <div className="ml-[1px] flex h-full w-[158px] shrink-0 border-r border-[#b5b5b5]">
        <Tool n="dataSource" />
        <Tool n="geopkg" star />
        <Tool n="vee" star />
        <Tool n="feather" star />
        <Tool n="chip" star />
      </div>
      <div className="w-[2px]" />
      <Grip />
      <div className="flex h-full w-[374px] shrink-0 border-r border-[#b5b5b5]">
        <div className="relative h-full">
          <Tool n="pencils" />
          <div className="absolute bottom-1 right-0"><Down /></div>
        </div>
        <Tool n="pencil" on />
        {["saveEdits", "polygon", "vertex", "modify", "trash", "cut", "copy", "paste", "undo", "redo"].map((n) => <Tool key={n} n={n} />)}
      </div>
      <div className="w-[1px]" />
      <Grip />
      <div className="flex h-full w-[251px] shrink-0 border-r border-[#b5b5b5]">
        {["tag", "diagram", "tagPinRed", "tagPin", "tagEye", "tagMove", "tagRotate", "tagEdit"].map((n) => <Tool key={n} n={n} />)}
      </div>
      <div className="w-[2px]" />
      <Grip />
      <div className="flex h-full w-[64px] shrink-0 border-r border-[#b5b5b5]">
        <Tool n="triangle" /><Tool n="binocular" />
      </div>
      <div className="w-[2px]" />
      <Grip />
      <div className="flex h-full w-[64px] shrink-0 border-r border-[#b5b5b5]">
        <Tool n="python" /><Tool n="layers3" />
      </div>
      <div className="w-[2px]" />
      <Grip />
      <div className="flex h-full w-[34px] shrink-0 border-r border-[#b5b5b5]"><Tool n="help" /></div>
      <div className="w-[1px]" />
      <Grip />
    </div>
  </div>
);

const MENUS: [string, string][] = [
  ["Project", "w-[50px]"], ["Edit", "w-[35px]"], ["View", "w-[37px]"], ["Layer", "w-[43px]"], ["Settings", "w-[55px]"], ["Plugins", "w-[50px]"],
  ["Vector", "w-[46px]"], ["Raster", "w-[48px]"], ["Database", "w-[62px]"], ["Web", "w-[38px]"], ["Processing", "w-[67px]"], ["Help", "w-[40px]"],
];

/* ---------- left docks ---------- */
const DockTitle = ({ t }: { t: string }) => (
  <div className="flex h-[19px] shrink-0 items-center border border-[#b9b9b9] bg-[#d9d9d9] pl-[3px] pr-[4px]">
    <span className="flex-1 pt-[2px]">{t}</span>
    <svg width="25" height="10" viewBox="0 0 25 10" fill="none" stroke="#000" strokeWidth="1.400">
      <path d="M3 3V1h6v5H7M3 1.500h6" /><path d="M1 3.700h5.500v5H1zM1 4.200h5.500" /><path d="M17 1l7 7.500M24 1l-7 7.500" />
    </svg>
  </div>
);

const BROWSER: [string, string, string][] = [
  ["star", "Favorites", ""], ["projHome", "Project Home", ">"], ["dir", "Home", ">"], ["dir", "C:\\", ">"], ["dir", "D:\\", ">"], ["dir", "H:\\", ">"], ["dir", "I:\\", ">"],
  ["geopkg", "GeoPackage", ""], ["feather", "SpatiaLite", ""], ["elephant", "PostGIS", ""], ["mssql", "MSSQL", ""], ["oracle", "Oracle", ""], ["db2", "DB2", ""],
  ["globe", "WMS/WMTS", ""], ["globe", "XYZ Tiles", "v"],
];
const TILES = ["Bing VirtualEarth", "CartoDb Dark Matter", "CartoDb Positron", "Esri Boundaries Places", "Esri Gray (dark)", "Esri Gray (light)", "Esri National Geographic"];

const LAYERS: [string, string, boolean, boolean][] = [
  ["tiles", "Google Satellite", false, false], ["veeGray", "lines", false, false], ["phase", "phase1_test", true, false], ["tiles", "OpenStreetMap Monochrome", false, false],
  ["tiles", "OpenStreetMap", true, true], ["tiles", "Esri Gray (light)", false, false], ["sssi", "sssi", false, false], ["tiles", "dtm", false, false], ["tiles", "dsm", false, false],
];

const Check = ({ on = false }: { on?: boolean }) => (
  <div className="flex h-[13px] w-[13px] shrink-0 items-center justify-center border border-[#222] bg-white">
    {on && <svg width="11" height="9" viewBox="0 0 11 9"><path d="M1.500 4.500l2.800 3L9.500 1.500" fill="none" stroke="#222" strokeWidth="1.300" /></svg>}
  </div>
);

const Docks = () => (
  <div className="flex w-[294px] shrink-0 flex-col">
    <DockTitle t="Browser" />
    <div className="flex h-[28px] shrink-0 items-center gap-[8px] pl-[6px]">
      {["addLayer", "refresh", "filter", "collapse", "info"].map((n) => <Icon key={n} n={n} s={15} />)}
    </div>
    <div className="flex h-[447px] shrink-0 overflow-hidden border border-[#828790] bg-white">
      <div className="flex-1 pt-[1px]">
        {BROWSER.map(([ic, t, a]) => (
          <div key={t} className="flex h-5 items-center pl-[5px]">
            <div className="w-[18px]">{a && <Chev open={a === "v"} />}</div>
            <Icon n={ic} s={16} />
            <span className="ml-[5px] pt-[2px]">{t}</span>
          </div>
        ))}
        {TILES.map((t) => (
          <div key={t} className="flex h-5 items-center pl-[43px]">
            <Icon n="tiles" s={16} />
            <span className="ml-[5px] whitespace-nowrap pt-[2px] tracking-[-0.13px]">{t}</span>
          </div>
        ))}
        <div className="pl-[43px] pt-[2px]"><Icon n="tiles" s={16} /></div>
      </div>
      <div className="flex w-[16px] flex-col items-center justify-between bg-[#f0f0f0] py-[4px]">
        <svg width="9" height="9" viewBox="0 0 9 9"><path d="M1 6.500l3.500-3.500L8 6.500" fill="none" stroke="#505050" strokeWidth="2" /></svg>
        <div className="mb-auto mt-[4px] h-[167px] w-[15px] bg-[#cdcdcd]" />
        <svg width="9" height="9" viewBox="0 0 9 9"><path d="M1 2.500L4.500 6 8 2.500" fill="none" stroke="#505050" strokeWidth="2" /></svg>
      </div>
    </div>
    <div className="h-[5px] shrink-0" />
    <DockTitle t="Layers" />
    <div className="flex h-[28px] shrink-0 items-center pl-[5px]">
      <Icon n="brush" s={15} />
      <div className="w-[8px]" />
      <Icon n="group" s={15} />
      <div className="w-[8px]" />
      <Icon n="eye" s={16} />
      <div className="ml-[4px] flex h-[21px] w-[23px] items-center justify-center border border-[#92c9f3] bg-[#c2dcf2]"><Icon n="filter" s={15} /></div>
      <div className="ml-[5px]"><Icon n="epsilon" s={14} /></div>
      <div className="ml-[6px] mr-[7px]"><Down /></div>
      <Icon n="expand" s={15} />
      <div className="w-[8px]" />
      <Icon n="collapse" s={15} />
      <div className="w-[8px]" />
      <Icon n="removeLayer" s={15} />
    </div>
    <div className="h-[356px] shrink-0 border border-[#828790] bg-white">
      {LAYERS.map(([ic, t, on, arrow]) => (
        <div key={t} className="flex h-5">
          <div className="flex w-5 items-center pl-[4px]">{arrow && <Chev />}</div>
          <div className={`flex flex-1 items-center pl-[3px] ${ic === "phase" ? "bg-[#d9d9d9]" : ""}`}>
            <Check on={on} />
            <div className="ml-[6px]"><Icon n={ic} s={16} /></div>
            <span className={`ml-[6px] whitespace-nowrap pt-[2px] font-bold ${on ? "text-black" : "text-[#c0c0c0]"} ${ic === "phase" ? "tracking-[0.35px] underline" : "tracking-[0.08px]"}`}>{t}</span>
          </div>
        </div>
      ))}
    </div>
  </div>
);

/* ---------- map canvas ---------- */
const MapCanvas = () => (
  <div className="flex-1 overflow-hidden border border-[#828790] bg-[#aad3df]">
    <svg width="1621" height="901" viewBox="243.400 90.600 1323.800 735.800" className="block">
      <defs>
        <pattern id="hatch" width="6.400" height="6.400" patternUnits="userSpaceOnUse">
          <path d="M-1-1l9 9M-1 5.400l2 2M5.400-1l2 2" stroke="#0a7a0a" strokeWidth=".8" />
        </pattern>
        <pattern id="sand" width="5" height="5" patternUnits="userSpaceOnUse">
          <rect width="5" height="5" fill="#f5e9b9" /><path d="M1 1h1v1H1zM3 3h1v1H3z" fill="#ecd9a0" />
        </pattern>
      </defs>
      <rect x="243" y="90" width="1324" height="737" fill="#aad3df" />
      <path d="M243 121q60 6 95 5 60-2 100-15 30-8 70-14l60-6v720L243 655z" fill="#f2efe9" />
      <path d="M243 590q50 14 80 33 60 18 90 34 35 20 60 50 50 32 92 42v62q-30-10-55-30-30-15-65-22-40-24-60-45-60-38-142-57z" fill="url(#sand)" />
      <path d="M243 657q82 20 142 58 20 21 60 45 35 7 65 22 25 20 55 30v20H243z" fill="#aad3df" />
      <path d="M243 654q82 20 142 58 20 21 60 45 35 7 65 22 25 20 55 30" fill="none" stroke="#a98fc0" strokeWidth="1.400" strokeDasharray="6 2 2 2" />
      <path d="M365.500 125l-3.500 70-7 78-5 28M354 276l21 27M434 251l-5 24-4 29M430 254l7-1" fill="none" stroke="#aad3df" strokeWidth="3" />
      <path d="M325 385l38 4 4 5-10 2-31-6zM370 393q10-5 30-1l30 6 22 5-3 9-16-2-20-7-42-4z" fill="#aad3df" />
      <path d="M243 271q30 5 40 18 25 20 70 15 60 8 110 18 60 5 100-2" fill="none" stroke="#c4c4c4" strokeWidth="2.600" />
      <path d="M243 271q30 5 40 18 25 20 70 15 60 8 110 18 60 5 100-2" fill="none" stroke="#fff" strokeWidth="1.400" />
      <g fill="none" stroke="#f2a9a6" strokeWidth="1.100" strokeDasharray="3 1.500 1 1.500">
        <path d="M325 130q-10 45-68 72" /><path d="M257 202q90-15 160-26t150-58" /><path d="M243 378q60-4 100 14 60 15 110 35" />
        <path d="M420 380q70-50 145-65" /><path d="M243 480q50 20 90 70 60 60 110 70" /><path d="M243 520q90 40 150 120t172 95" /><path d="M380 625q90 20 185 85" />
      </g>
      <path d="M542 495q6 14-10 28-30 24-55 34-25 14-40 24-15 8-33 10-5-6 4-8 45-20 62-44 22-26 40-40 14-8 32-4zM475 457l8 18-1 15-8-8z" fill="#aad3df" />
      <path d="M567 345L449 456l-1 108 118 97 300-40V345z" fill="url(#hatch)" />
      <g fill="none" stroke="#111" strokeWidth=".9">
        <path d="M567 345L449 456l-1 108 118 97" /><path d="M567 393l-37 33 10 6-78 59 85 66 20-10M540 432l27 22M547 557l-18 45 38 24" />
      </g>
    </svg>
  </div>
);

/* ---------- dialog ---------- */
const PAGES: [string, string][] = [
  ["info", "Information"], ["source", "Source"], ["symb", "Symbology"], ["tag", "Labels"], ["diagram", "Diagrams"], ["cube", "3D View"], ["fields", "Source Fields"], ["attr", "Attributes Form"],
  ["joins", "Joins"], ["aux", "Auxiliary Storage"], ["actions", "Actions"], ["display", "Display"], ["render", "Rendering"], ["vars", "Variables"], ["meta", "Metadata"], ["deps", "Dependencies"],
  ["legend", "Legend"], ["server", "QGIS Server"],
];

const Btn = ({ t, arrow = false }: { t: string; arrow?: boolean }) => (
  <div className="flex h-[21px] w-[74px] shrink-0 items-center justify-center border border-[#adadad] bg-[#e1e1e1]">
    <span className="whitespace-nowrap pt-[2px] tracking-[-0.15px]">{t}</span>
    {arrow && <div className="ml-[6px]"><Down big /></div>}
  </div>
);
const Rule = ({ c = "" }: { c?: string }) => <div className={`h-[2px] shrink-0 border-t border-[#a0a0a0] bg-white ${c}`} />;

const SmallHatch = ({ bg }: { bg: string }) => (
  <svg width="16" height="16" viewBox="0 0 16 16" className="block shrink-0">
    <rect x=".5" y=".5" width="15" height="15" fill={bg} stroke="#555" />
    <path d="M1 9l6 6M1 2.500L13.500 15M6 1l9 9M12 1l3 3" stroke="#1b8a3c" strokeWidth=".9" />
  </svg>
);

const Spin = () => (
  <div className="flex h-[16px] w-[13px] flex-col justify-between">
    <div className="flex h-[8px] items-center justify-center border border-[#c8c8c8] bg-[#f0f0f0]"><svg width="5" height="3" viewBox="0 0 6 4"><path d="M0 4h6L3 0z" /></svg></div>
    <div className="flex h-[8px] items-center justify-center border border-[#c8c8c8] bg-[#f0f0f0]"><svg width="5" height="3" viewBox="0 0 6 4"><path d="M0 0h6L3 4z" /></svg></div>
  </div>
);

const Frame = ({ fill, stroke, w = 2, kids }: { fill: string; stroke: string; w?: number; kids?: React.ReactNode }) => (
  <svg width="52" height="46" viewBox="0 0 52 46" className="block overflow-visible">
    <rect x="2.500" y="3" width="47" height="40" fill={fill} stroke={stroke} strokeWidth={w} strokeLinejoin="round" />
    {kids}
  </svg>
);
const range = (n: number) => Array.from({ length: n }, (_, i) => i);
const fwd = <g stroke="#111" strokeWidth="1.300">{range(11).map((i) => <path key={i} d={`M${-36 + i * 8} 43l40-40`} />)}</g>;
const back = <g stroke="#111" strokeWidth="1.300">{range(11).map((i) => <path key={i} d={`M${-36 + i * 8} 3l40 40`} />)}</g>;
const clip = (k: React.ReactNode) => (
  <svg x="2.500" y="3" width="47" height="40" viewBox="3 3 47 40">{k}</svg>
);
const reds: [number, number][] = [[20, 3], [49, 8], [3, 20], [15, 42], [49, 42]];
const greens: [number, number][] = [[3, 3], [37, 3], [49, 25], [3, 37], [32, 42]];

const SYMBOLS: [string, React.ReactNode, string][] = [
  ["gradient   plasma", <Frame fill="url(#plasma)" stroke="#111" w={1.5} kids={<defs><radialGradient id="plasma" cx="0" cy="0" r="1.35"><stop offset="0" stopColor="#1a0a90" /><stop offset=".28" stopColor="#8405a7" /><stop offset=".55" stopColor="#d3556d" /><stop offset=".8" stopColor="#fa9e3b" /><stop offset="1" stopColor="#f7e425" /></radialGradient></defs>} />, "justify-start pl-[19px]"],
  ["gray 3 fill", <Frame fill="#969696" stroke="#b8b8b8" w={1} />, "justify-center"],
  ["hashed black /", <Frame fill="#fff" stroke="#111" w={1.8} kids={clip(fwd)} />, "justify-start pl-[5px]"],
  ["hashed black X", <Frame fill="#fff" stroke="#111" w={1.8} kids={clip(<g>{fwd}{back}</g>)} />, "justify-start pl-[5px]"],
  ["hashed black \\", <Frame fill="#fff" stroke="#111" w={1.8} kids={clip(back)} />, "justify-start pl-[5px]"],
  ["outline blue", <Frame fill="#fff" stroke="#377eb8" w={3.5} />, "justify-center"],
  ["outline green", <Frame fill="#fff" stroke="#4daf4a" w={3.5} />, "justify-center"],
  ["outline red", <Frame fill="#fff" stroke="#e31a1c" w={3.5} />, "justify-center"],
  ["outline xpattern", <Frame fill="#f7f7f7" stroke="#999" w={1.5} kids={<g>{reds.map(([x, y]) => <circle key={`${x}-${y}`} cx={x} cy={y} r="3.800" fill="#e31a1c" stroke="#8f1113" strokeWidth=".6" />)}{greens.map(([x, y]) => <circle key={`${x}-${y}`} cx={x} cy={y} r="3.800" fill="#4daf4a" stroke="#2c7a2a" strokeWidth=".6" />)}</g>} />, "justify-start pl-[19px]"],
  ["pattern dot black", <Frame fill="#fff" stroke="#333" w={1.5} kids={clip(<g>{range(5).map((r) => range(7).map((c) => <circle key={`${r}-${c}`} cx={(r % 2 ? 8 : 4) + c * 9} cy={4 + r * 9} r="1.600" fill="#000" />))}</g>)} />, "justify-start pl-[12px]"],
  ["pattern zelda", <Frame fill="#ff6613" stroke="#f07020" w={1} kids={clip(<path d="M4 3h8l4 9H6zM18 3h12l4 9H14zM36 3h10l3 9H33zM8 12l9 18H3V22zM28 12l9 18H18zM46 12l4 8v10H38zM6 30l7 13H3V34zM23 30l7 13H16zM41 30l7 13H34z" fill="#fdbb58" />)} />, "justify-start pl-[5px]"],
  ["simple blue fill", <Frame fill="#377eb8" stroke="#2a6496" w={1} />, "justify-start pl-[10px]"],
  ["simple green fill", <Frame fill="#4daf4a" stroke="#3c8f3a" w={1} />, "justify-start pl-[5px]"],
  ["simple red fill", <Frame fill="#e31a1c" stroke="#a81315" w={1} />, "justify-center"],
];

const StyleMenu = () => {
  const row = "flex h-[22px] items-center pl-[31px] pt-[2px]";
  const sep = "my-[4px] ml-[28px] h-px bg-[#d7d7d7]";
  return (
    <div className="absolute left-[155px] top-[706px] w-[148px] border border-[#c6c6c6] bg-[#f0f0f0] px-[2px] pb-[2px] pt-[2px] shadow-[4px_4px_3px_-1px_rgba(0,0,0,0.5)]">
      <div className={`${row} bg-[#91c9f7]`}>Load Style</div>
      <div className={`${row} justify-between pr-[10px]`}>Save Style<svg className="-mt-[3px]" width="5" height="8" viewBox="0 0 5 8"><path d="M0 0v8l5-4z" /></svg></div>
      <div className={sep} />
      <div className={row}>Save as Default</div>
      <div className={row}>Restore Default</div>
      <div className={sep} />
      <div className={row}>Add...</div>
      <div className={row}>Rename Current...</div>
      <div className={sep} />
      <div className="flex h-[22px] items-center text-[#6d6d6d]">
        <div className="mr-[9px] flex h-[22px] w-[22px] items-center justify-center bg-[#91c9f7]"><svg width="11" height="9" viewBox="0 0 11 9"><path d="M1 4.500l3 3.500L10 1" fill="none" stroke="#8f9aa5" strokeWidth="1.500" /></svg></div>
        <span className="pt-[2px]">default</span>
      </div>
    </div>
  );
};

const Dialog = () => (
  <div className="absolute left-[692px] top-[113px] flex h-[920px] w-[975px] flex-col border border-[#1883d7] bg-[#f0f0f0] shadow-[0_4px_18px_rgba(0,0,0,0.45)]">
    <div className="flex h-[30px] shrink-0 items-center bg-white pl-[9px] pr-[17px] text-black [font-stretch:normal]">
      <QLogo s={16} />
      <span className="ml-[4px] flex-1 whitespace-nowrap font-['Open_Sans'] text-[12px] tracking-[-0.35px]">Layer Properties - phase1_test | Symbology</span>
      <span className="mr-[38px] font-['Open_Sans'] text-[13px] font-semibold">?</span>
      <svg width="11" height="11" viewBox="0 0 11 11" stroke="#000" strokeWidth="1.100"><path d="M.5.5l10 10M10.500.5l-10 10" /></svg>
    </div>
    <div className="flex flex-1">
      <div className="w-[150px] shrink-0 bg-[#5c5c5c]">
        <div className="flex h-[20px] items-center border border-[#7a7a7a] bg-white pl-[8px]">
          <svg width="13" height="13" viewBox="0 0 13 13" fill="none" stroke="#8c8c8c" strokeWidth="1.300"><circle cx="5.500" cy="5.500" r="4" /><path d="M8.500 8.500l4 4" /></svg>
        </div>
        <div className="pt-[6px]">
          {PAGES.map(([ic, t]) => (
            <div key={t} className={`flex h-[38px] items-center ${ic === "symb" ? "bg-[#f0f0f0] pl-[8px] text-black" : "pl-[5px] text-white"}`}>
              <Icon n={ic} s={24} />
              <span className="ml-[7px] whitespace-nowrap pt-[4px] tracking-[-0.12px]">{t}</span>
            </div>
          ))}
        </div>
      </div>
      <div className="flex flex-1 flex-col pl-[5px] pr-[3px]">
        <div className="mt-[3px] flex h-[22px] shrink-0 items-center border border-[#adadad] bg-[#e1e1e1] pl-[6px] pr-[4px]">
          <svg width="14" height="15" viewBox="0 0 14 15" fill="#0fae57" stroke="#06693a"><path d="M1 1h9v3H1zM3.500 6h9.500v3H3.500zM1 11h9v3H1z" /></svg>
          <span className="ml-[3px] flex-1 pt-[3px] tracking-[-0.42px]">Single symbol</span>
          <Down big />
        </div>
        <div className="mt-[6px] flex h-[100px] shrink-0">
          <div className="w-[405px] border border-[#828790] bg-white">
            <div className="flex h-5">
              <div className="flex w-[20px] items-center pl-[5px]"><Chev open /></div>
              <div className="flex flex-1 items-center bg-[#d9d9d9] pl-[3px] font-bold"><SmallHatch bg="#cfd8dc" /><span className="ml-[6px] pt-[3px] tracking-[-0.3px]">Fill</span></div>
            </div>
            <div className="flex h-5 items-center pl-[43px]"><SmallHatch bg="#fff" /><span className="ml-[5px] pt-[3px] tracking-[-0.4px]">Simple fill</span></div>
          </div>
          <div className="flex flex-1 items-center justify-center pl-[7px] pt-[1px]">
            <svg width="62" height="62" viewBox="0 0 62 62">
              <svg x="1" y="1" width="60" height="60" viewBox="1 1 60 60"><g stroke="#0a8a0a" strokeWidth="1">{range(16).map((i) => <path key={i} d={`M${-60 + i * 8.2} 0l62 62`} />)}</g></svg>
              <rect x=".7" y=".7" width="60.600" height="60.600" fill="none" stroke="#000" strokeWidth="1.300" />
            </svg>
          </div>
        </div>
        <div className="mt-[7px] flex h-[22px] shrink-0 gap-[8px] pl-px">
          <div className="flex w-[26px] items-center justify-center border border-[#adadad] bg-[#e1e1e1]"><svg width="14" height="14" viewBox="0 0 14 14"><path d="M5 .7h4V5h4.300v4H9v4.300H5V9H.7V5H5z" fill="#fff" stroke="#3d8047" strokeWidth="1.300" /><path d="M7 3v8M3 7h8" stroke="#4c8a53" strokeWidth="1.200" /></svg></div>
          {[
            <path key="a" d="M.7 5h12.600v4H.7z" fill="#fff" stroke="#999" />,
            <path key="b" d="M2 6h9v7H2zM8 6V3q0-2.500-2.500-2.500T3 2.500" fill="#d5d5d5" stroke="#aaa" />,
            <path key="c" d="M1 2v11h10M3.500 1H13v9l-2 2H3.500z" fill="#f3f3f3" stroke="#999" />,
            <path key="d" d="M7 1l6.500 11.500H.5z" fill="#b4b4b4" stroke="#8a8a8a" />,
            <path key="e" d="M7 13L.5 1.500h13z" fill="#b4b4b4" stroke="#8a8a8a" />,
          ].map((p, i) => (
            <div key={i} className="flex w-[26px] items-center justify-center border border-[#bfbfbf] bg-[#cccccc]"><svg width="14" height="14" viewBox="0 0 14 14">{p}</svg></div>
          ))}
        </div>
        <Rule c="mt-[7px]" />
        <div className="mt-[7px] flex h-[20px] shrink-0 items-center">
          <span className="w-[37px] pt-[2px]">Unit</span>
          <div className="flex h-full flex-1 items-center justify-between border border-[#adadad] bg-[#e1e1e1] pl-[2px] pr-[4px]"><span className="pt-[2px] tracking-[-0.6px]">Millimeter</span><Down big /></div>
        </div>
        <div className="flex h-[21px] shrink-0 items-center">
          <span className="w-[37px] pt-[4px] tracking-[-0.25px]">Opacity</span>
          <div className="relative h-[4px] flex-1 border border-[#d6d6d6] bg-[#e7eaea]"><div className="absolute right-0 top-[-10px] h-[21px] w-[10px] bg-[#0078d7]" /></div>
          <div className="ml-[3px] mt-px flex h-[18px] w-[100px] items-center justify-between border border-[#7a7a7a] bg-white pl-[3px] pr-px"><span className="pt-[3px]">100.0 %</span><Spin /></div>
        </div>
        <div className="mt-[2px] flex h-[20px] shrink-0 items-center">
          <span className="w-[38px] pt-[3px]">Color</span>
          <div className="flex h-full flex-1 items-center border border-[#adadad] bg-[#e1e1e1] p-[2px] pl-[3px]"><div className="h-full flex-1 rounded-[3px] bg-[#008000]" /></div>
          <div className="flex h-full w-[12px] items-center justify-center border border-l-0 border-[#adadad] bg-[#ececec]"><Down /></div>
        </div>
        <Rule c="mt-[68px]" />
        <div className="mt-[6px] flex h-[21px] shrink-0 items-center">
          <span className="w-[56px] pt-[2px] tracking-[-0.25px]">Symbols in</span>
          <div className="mr-[7px] flex h-[20px] flex-1 items-center justify-between border border-[#7a7a7a] bg-white pl-[3px] pr-[4px]"><span className="pt-[2px]">Favorites</span><svg width="9" height="6" viewBox="0 0 9 6"><path d="M.5.5l4 4.500 4-4.500" fill="none" stroke="#444" /></svg></div>
          <Btn t="Open Library" />
        </div>
        <div className="mt-[5px] h-[460px] shrink-0 border border-[#828790] bg-white">
          <div className="ml-[3px] grid w-[704px] grid-cols-8 pt-[19px]">
            {SYMBOLS.map(([t, g, c]) => (
              <div key={t} className="h-[96px] w-[88px]">
                <div className="flex justify-center">{g}</div>
                <div className={`ml-[1px] mt-[15px] flex w-[85px] overflow-hidden whitespace-pre text-[12.5px] leading-[18px] tracking-[-0.1px] text-black ${c}`}>
                  <span>{t}</span>
                </div>
              </div>
            ))}
          </div>
        </div>
        <div className="mt-[7px] flex shrink-0 justify-end gap-[7px]"><Btn t="Save symbol" /><Btn t="Advanced" arrow /></div>
        <Rule c="mt-[13px]" />
        <div className="mt-[19px] flex shrink-0 gap-[7px]">
          <div className="ml-px mr-auto flex h-[21px] w-[74px] items-center border border-[#005499] bg-[#cce4f7] pl-[16px]">
            <span className="pt-[2px]">Style</span>
            <div className="ml-auto mr-[5px]"><Down big /></div>
          </div>
          <Btn t="OK" /><Btn t="Cancel" /><Btn t="Apply" /><Btn t="Help" />
        </div>
      </div>
    </div>
    <StyleMenu />
  </div>
);

/* ---------- status bar and taskbar ---------- */
const StatusBar = () => (
  <div className="flex h-[27px] shrink-0 items-center bg-[#f0f0f0] pl-[4px] pr-[7px]">
    <div className="flex h-[20px] w-[200px] items-center border border-[#7a7a7a] bg-white pl-[8px] text-[#777]">
      <svg width="13" height="13" viewBox="0 0 13 13" fill="none" stroke="#8c8c8c" strokeWidth="1.300"><circle cx="5.500" cy="5.500" r="4" /><path d="M8.500 8.500l4 4" /></svg>
      <span className="ml-[6px] pt-[2px]">Type to locate (Ctrl+K)</span>
    </div>
    <div className="ml-[984px] h-[20px] w-[100px] border border-[#7a7a7a] bg-white" />
    <div className="ml-[60px] h-[20px] w-[78px] border border-[#7a7a7a] bg-white" />
    <div className="ml-[80px] flex h-[20px] w-[82px] items-center justify-end border border-[#7a7a7a] bg-white pr-px"><Spin /></div>
    <div className="ml-auto flex h-[20px] w-[80px] items-center justify-end border border-[#7a7a7a] bg-white pr-px"><span className="mr-[38px]">°</span><Spin /></div>
    <div className="ml-[6px]"><Check on /></div>
    <span className="ml-[4px] w-[53px] pt-[2px]">Render</span>
    <svg width="15" height="15" viewBox="0 0 16 16"><path d="M8 1q7 2 7 7t-7 7Q1 13 1 8t7-7z" fill="#777" /><path d="M1 6h14M1 10h14M5 2v12M11 2v12M8 1v14" stroke="#d8d8d8" strokeWidth=".8" /></svg>
    <span className="ml-[3px] w-[77px] pt-[2px] tracking-[-0.2px]">EPSG:27700</span>
    <svg width="16" height="15" viewBox="0 0 16 15"><path d="M8 0q8 0 8 6 0 5-6 5.500L12 15 7 11.500Q0 11 0 6q0-6 8-6z" fill="#666" /><circle cx="4.500" cy="6" r="1" fill="#fff" /><circle cx="8" cy="6" r="1" fill="#fff" /><circle cx="11.500" cy="6" r="1" fill="#fff" /></svg>
  </div>
);

const TaskButton = ({ children, on = false, run = true }: { on?: boolean; run?: boolean } & Kids) => (
  <div className={`flex h-full w-[49px] shrink-0 flex-col items-center ${on ? "bg-[#0b528f]" : ""}`}>
    <div className="flex flex-1 items-center">{children}</div>
    <div className={`h-[2px] ${on ? "w-full" : "w-[40px]"} ${run ? "bg-[#90c8f6]" : ""}`} />
  </div>
);

const Taskbar = () => (
  <div className="flex h-[40px] shrink-0 items-center bg-[#062a48] font-['Open_Sans'] text-white [font-stretch:normal]">
    <div className="flex w-[48px] justify-center"><svg width="17" height="17" viewBox="0 0 17 17" fill="#fff"><path d="M0 2.500L7 1.500V8H0zM8 1.300L17 0v8H8zM0 9h7v6.500L0 14.500zM8 9h9v8l-9-1.300z" /></svg></div>
    <div className="flex h-full w-[344px] items-center border-t border-[#b5bcc2] bg-[#f2f3f5] pl-[9px] pr-[15px] text-[#333]">
      <svg width="22" height="22" viewBox="0 0 22 22"><circle cx="11" cy="11" r="9" fill="none" stroke="#111" strokeWidth="3" /></svg>
      <span className="ml-[9px] flex-1 pb-[2px] text-[14px] tracking-[-0.2px]">Type here to search</span>
      <svg width="12" height="18" viewBox="0 0 12 18" fill="none" stroke="#333" strokeWidth="1.200"><rect x="3.500" y=".7" width="5" height="11" /><path d="M1 8v5.500h10V8M6 13.500v4M3.500 17.300h5" /></svg>
    </div>
    <div className="flex w-[50px] justify-center pr-[3px]"><svg width="17" height="17" viewBox="0 0 17 17" fill="none" stroke="#fff" strokeWidth="1.200"><path d="M1 0v3h10V0M1 17v-3h10v3M1 5.500h10v6H1zM15 0v3M15 8v9M13.500 5h3" /></svg></div>
    <TaskButton run={false}>
      <svg width="20" height="21" viewBox="0 0 20 21"><path d="M0 9Q2 0 10.500 0 19.500 0 20 10v2.500H6.500q.5 4.500 5.500 4.500 4 0 7-2v4q-3 2-8 2-9 0-9-8 0-5 4.500-7Q5 8 6.500 8.500h7Q13.500 4.500 9.500 4.500 4 4.500 0 9z" fill="#0078d7" /></svg>
    </TaskButton>
    <TaskButton>
      <svg width="22" height="19" viewBox="0 0 22 19"><path d="M0 1h8l2 2h12v16H0z" fill="#fbe08b" /><path d="M0 1h8l2 2H0z" fill="#e8b53b" /><path d="M4 19v-8h14v8h-4v-4H8v4z" fill="#3aa7e4" /></svg>
    </TaskButton>
    <TaskButton>
      <svg width="24" height="23" viewBox="0 0 24 23"><path d="M3 12Q4 3 12.500 3 21 3 21 13H8.500q.5 4 4.500 4 3 0 4-2h4q-2 6-8.500 6Q4 21 3 12zM8.500 10h7.500q-.5-3.500-3.700-3.500T8.500 10z" fill="#5cc7f2" fillRule="evenodd" /><path d="M2 21Q-1 18 7 9 18-2 22 1q1.500 1.500-.5 5 1-4-2-3.500Q13 4 6 13q-5 7-4 8z" fill="#f6cf3a" /></svg>
    </TaskButton>
    <TaskButton on><QLogo s={22} /></TaskButton>
    <TaskButton>
      <svg width="23" height="23" viewBox="0 0 23 23"><circle cx="11.500" cy="12" r="10.500" fill="#ff6a1f" /><path d="M11 4q6-3 10 4 3 8-3 13-3 2-6 2 8-3 6-11-2-5-7-8z" fill="#ffcb2d" /><circle cx="11" cy="11.500" r="6" fill="#3a4ed0" /><path d="M3 5q2 3 6 3l3 3-4 1q1 4 6 3 3 0 4-3 1 7-6 8-8 0-10-8 0-4 1-7z" fill="#f0403c" /></svg>
    </TaskButton>
    <div className="flex-1" />
    <div className="flex items-center">
      <svg width="15" height="16" viewBox="0 0 15 16" fill="none" stroke="#fff" strokeWidth="1.200"><circle cx="5" cy="7.500" r="2.500" /><path d="M.7 15.500q0-5 4.300-5t4.300 5" /><circle cx="11" cy="3" r="2.400" /><path d="M9.500 6.500q4.500-1 5 4" /></svg>
      <svg className="ml-[23px]" width="12" height="7" viewBox="0 0 12 7"><path d="M1 6l5-5 5 5" fill="none" stroke="#fff" strokeWidth="1.400" /></svg>
      <svg className="ml-[9px]" width="17" height="11" viewBox="0 0 17 11"><path d="M2 10Q-1 8 1.500 5.500 3 4.500 4 5 5 1 8.500 1q3 0 4 3 3 0 3 2.500Q17.500 8 16 10z" fill="#1379d4" /></svg>
      <svg className="ml-[8px]" width="17" height="14" viewBox="0 0 17 14" fill="none" stroke="#fff" strokeWidth="1.200"><path d="M4 2.500h12v8H5.500M10 10.500v3M6 13.300h8M1 1h4v3.500H1zM3 4.500V13" /></svg>
      <svg className="ml-[7px]" width="17" height="14" viewBox="0 0 17 14" fill="none" stroke="#fff" strokeWidth="1.100"><path d="M1 4.500h2L6.500 1v12L3 9.500H1zM9 4.500q1.500 2.500 0 5M11.500 3q2.500 4 0 8M14 1.500q3.500 5.500 0 11" /></svg>
    </div>
    <div className="ml-[7px] w-[62px] whitespace-nowrap text-center text-[12px] leading-[18px] tracking-[-0.55px]"><div>16:14</div><div>25/09/2018</div></div>
    <div className="relative ml-[16px] h-[22px] w-[26px]">
      <svg width="16" height="17" viewBox="0 0 16 17"><path d="M0 0h16v12h-8v5l-5-5H0z" fill="#fff" /><path d="M3 3.500h10M3 6h10M3 8.500h7" stroke="#062a48" /></svg>
      <div className="absolute left-[7px] top-[8px] flex h-[17px] w-[17px] items-center justify-center rounded-full border border-[#7fa8cc] bg-[#0b4f87] text-[11px]">1</div>
    </div>
    <div className="ml-[11px] mr-[4px] h-full w-px bg-[#5c7489]" />
  </div>
);

export default function App() {
  return (
    <div className="relative flex h-[1080px] w-[1920px] flex-col overflow-hidden bg-[#f0f0f0] text-[11px] leading-[14px] tracking-[-0.1px] text-black [font-family:'DejaVu_Sans_Condensed','DejaVu_Sans',sans-serif] [font-stretch:condensed]">
      <div className="flex h-[24px] shrink-0 items-center bg-white pb-[2px] pl-[2px] pr-[18px] [font-stretch:normal]">
        <QLogo s={15} />
        <span className="ml-[6px] flex-1 font-['Open_Sans'] text-[12px] tracking-[-0.4px] text-[#888]">*hh1 - QGIS</span>
        <svg width="105" height="12" viewBox="0 0 105 12" fill="none" stroke="#888"><path d="M2 6.500h10M48 3.500h7v7h-7zM50 3.500v-2h7v7h-2M94 1l9.500 9.500M103.500 1L94 10.500" /></svg>
      </div>
      <div className="flex h-[18px] shrink-0 items-center bg-white pl-[7px] pt-[2px] text-[#8d8d8d]">
        {MENUS.map(([t, w]) => <span key={t} className={`${w} shrink-0`}>{t}</span>)}
      </div>
      <Toolbars />
      <div className="flex h-[902px] shrink-0">
        <Docks />
        <div className="w-[4px] shrink-0" />
        <MapCanvas />
      </div>
      <StatusBar />
      <Taskbar />
      <Dialog />
    </div>
  );
}
